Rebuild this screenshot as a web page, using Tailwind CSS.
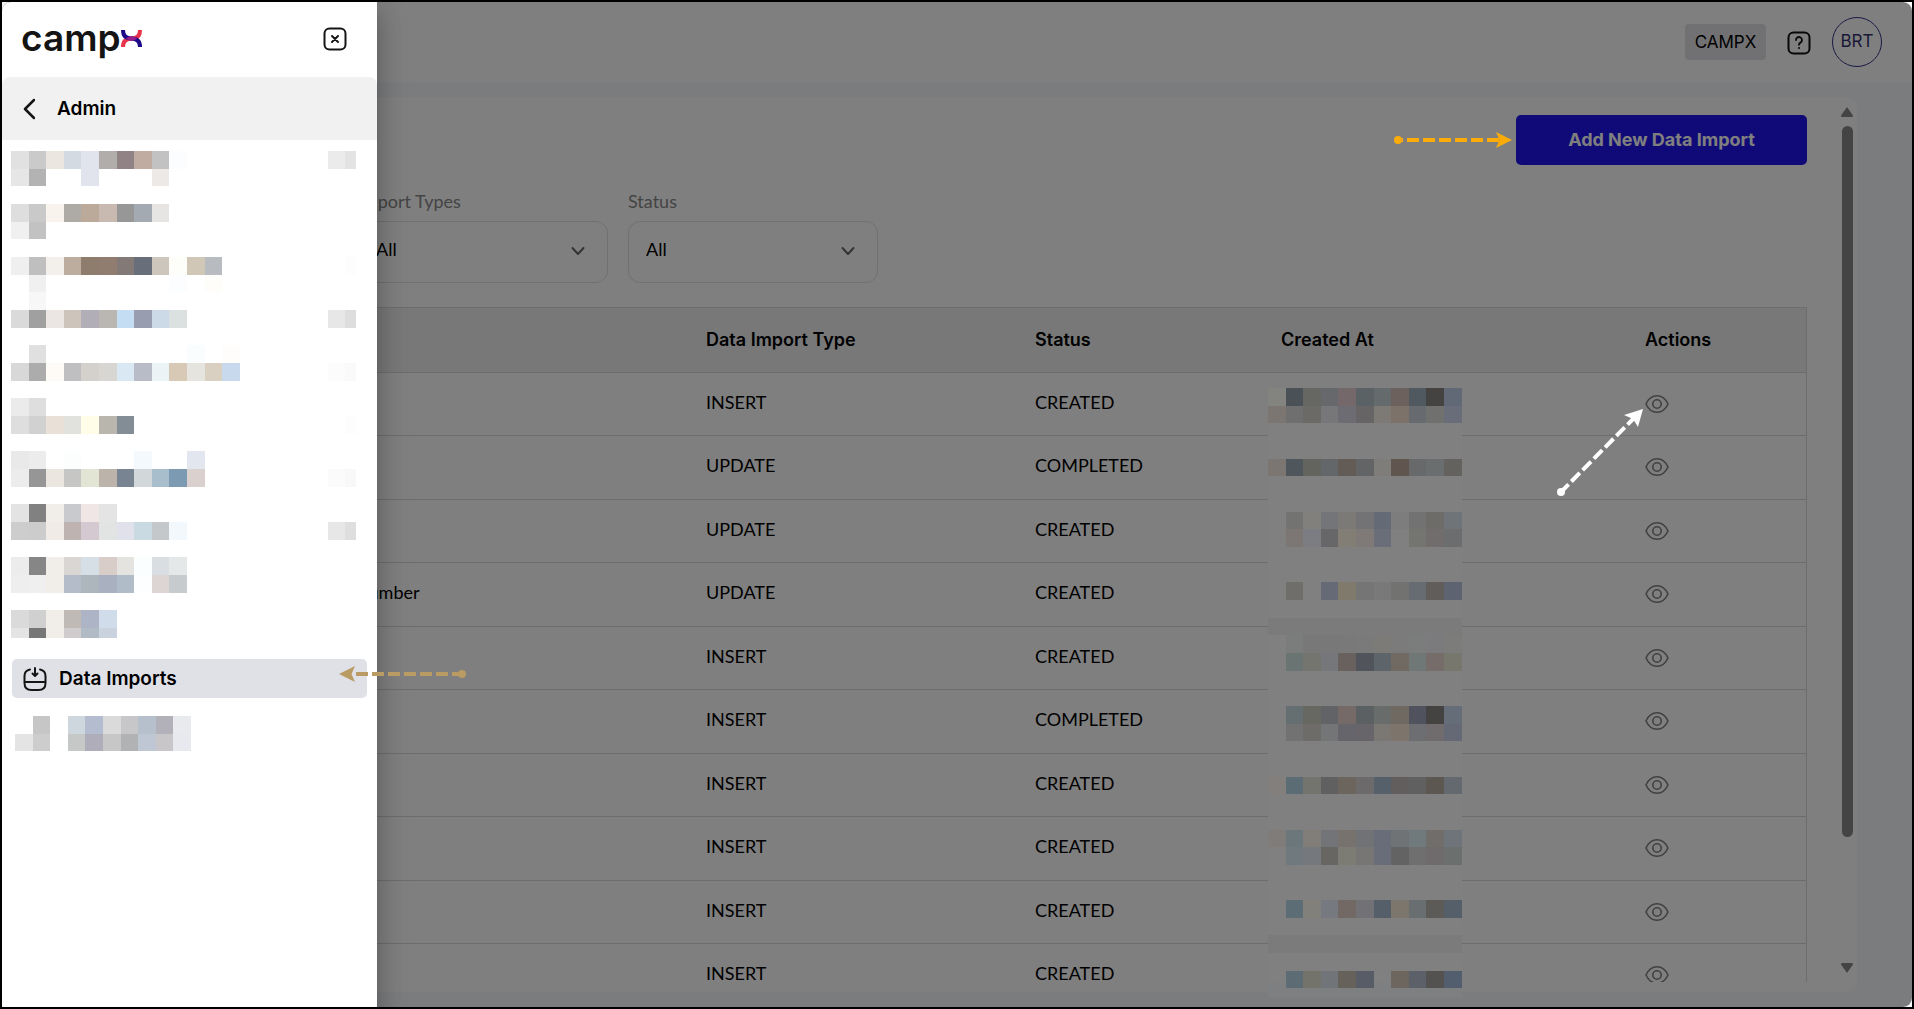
<!DOCTYPE html>
<html lang="en">
<head>
<meta charset="utf-8">
<title>CampX – Data Imports</title>
<script src="https://cdn.jsdelivr.net/npm/@tailwindcss/browser@4"></script>
</head>
<body class="bg-white">
<div class="relative h-screen overflow-hidden border-2 border-black bg-white font-['Lato',sans-serif] text-lg text-black">

  <!-- Page behind the drawer -->
  <div class="flex h-full flex-col bg-[#f6f8fc]">
    <header class="flex h-20 shrink-0 items-center justify-end gap-[21px] bg-white pr-[30px] font-['Inter',sans-serif]">
      <span class="flex h-9 w-[81px] items-center justify-center rounded bg-[#e2e2e7] text-[17px]">CAMPX</span>
      <button type="button" aria-label="Help" class="pt-0.5">
        <svg class="size-6" viewBox="0 0 24 24" fill="none" stroke="#111" stroke-width="2" stroke-linecap="round"><rect x="1.500" y="1.500" width="21" height="21" rx="5"/><path d="M9 9a3 3 0 1 1 4.500 2.600c-1 .600-1.500 1.200-1.500 2.200" stroke-width="1.800"/><circle cx="12" cy="17" r=".4" stroke-width="1.400"/></svg>
      </button>
      <button type="button" class="size-[50px] rounded-full border border-[#33338a] pb-0.5 text-[17px] text-[#33336e]">BRT</button>
    </header>

    <main class="mt-[15px] mr-[55px] mb-[15px] flex min-h-0 flex-1 rounded-r-xl bg-white">
      <div class="mb-2.5 min-w-0 flex-1 overflow-hidden pt-[18px] pl-[340px]">
        <div class="flex justify-end">
          <button type="button" class="h-[50px] w-[291px] rounded-[5px] bg-[#1e14f0] font-['Inter',sans-serif] text-lg font-bold text-white">Add New Data Import</button>
        </div>
        <div class="mt-6 flex gap-5 pl-4">
          <div class="flex w-[250px] flex-col gap-2">
            <label for="types" class="leading-6 text-[#888]">Import Types</label>
            <div class="relative">
              <select id="types" class="h-[62px] w-full appearance-none rounded-xl border border-[#e0e0e0] bg-white px-[17px] pb-1.5"><option>All</option></select>
              <svg class="pointer-events-none absolute top-[25px] right-[23px] h-2.5 w-3.5" viewBox="0 0 14 10" fill="none" stroke="#666" stroke-width="2" stroke-linecap="round" stroke-linejoin="round"><path d="M1.500 2 7 8l5.500-6"/></svg>
            </div>
          </div>
          <div class="flex w-[250px] flex-col gap-2">
            <label for="status" class="leading-6 text-[#888]">Status</label>
            <div class="relative">
              <select id="status" class="h-[62px] w-full appearance-none rounded-xl border border-[#e0e0e0] bg-white px-[17px] pb-1.5"><option>All</option></select>
              <svg class="pointer-events-none absolute top-[25px] right-[23px] h-2.5 w-3.5" viewBox="0 0 14 10" fill="none" stroke="#666" stroke-width="2" stroke-linecap="round" stroke-linejoin="round"><path d="M1.500 2 7 8l5.500-6"/></svg>
            </div>
          </div>
        </div>
        <div class="mt-6 border-x border-t border-[#dadada]">
          <table class="w-full table-fixed text-left">
            <colgroup><col><col class="w-[329px]"><col class="w-[246px]"><col class="w-[364px]"><col class="w-[161px]"></colgroup>
            <thead>
              <tr class="h-16 border-b border-[#dadada] bg-[#f1f1f1] font-['Inter',sans-serif] text-lg">
                <th class="p-0"></th><th class="p-0 font-semibold">Data Import Type</th><th class="p-0 font-semibold">Status</th><th class="p-0 font-semibold">Created At</th><th class="p-0 font-semibold">Actions</th>
              </tr>
            </thead>
            <tbody id="rows"></tbody>
          </table>
        </div>
      </div>
      <!-- Scroll bar -->
      <div class="flex w-[50px] shrink-0 flex-col items-center pt-2.5 pr-px pb-[19px] pl-[31px]">
        <svg class="h-2.5 w-3 shrink-0" viewBox="0 0 12 10" fill="#888"><path d="M6 0 12 8.500Q12 10 11 10H1Q0 10 0 8.500Z"/></svg>
        <div class="mt-[9px] flex min-h-0 flex-1 flex-col"><div class="h-[85%] w-[11px] rounded-full bg-[#888]"></div></div>
        <svg class="h-2.5 w-3 shrink-0" viewBox="0 0 12 10" fill="#888"><path d="M6 10 0 1.500Q0 0 1 0H11Q12 0 12 1.500Z"/></svg>
      </div>
    </main>
  </div>

  <!-- Backdrop -->
  <div class="absolute inset-0 rounded-[9px] bg-black/50"></div>

  <!-- Redacted creation dates -->
  <svg id="dates" class="absolute top-[386px] right-[450px] h-[610px] w-[194px]" shape-rendering="crispEdges" aria-hidden="true"><rect width="194" height="594" fill="#808080"/><rect y="594" width="194" height="16" fill="#7e7f80"/></svg>

  <!-- Drawer -->
  <aside class="absolute inset-y-0 left-0 flex w-[375px] flex-col rounded-tl-[9px] bg-white shadow-[0_8px_10px_-5px_rgba(0,0,0,0.2),0_16px_24px_2px_rgba(0,0,0,0.14),0_6px_30px_5px_rgba(0,0,0,0.12)]">
    <div class="flex h-[75px] shrink-0 items-start justify-between pr-[30px] pl-[19px]">
      <a href="#" class="flex items-start pt-3.5 text-[#141414]">
        <span class="font-['Inter',sans-serif] text-[37px] leading-[44px] font-semibold">camp</span>
        <svg class="mt-3.5 h-[17px] w-[21px]" viewBox="0 0 21 17" fill="none" stroke-width="4"><path d="M19 0c0 6-3.500 8.500-8.500 8.500S2 11 2 17" stroke="#e8344a"/><path d="M2 0c0 6 3.500 8.500 8.500 8.500S19 11 19 17" stroke="#1c0a86"/><path d="M5.500 8.500Q10.500 5 15.500 8.500 10.500 12 5.500 8.500Z" fill="#951f8d" stroke="#951f8d" stroke-width="1"/></svg>
      </a>
      <button type="button" aria-label="Close" class="mt-[25px]">
        <svg class="size-6" viewBox="0 0 24 24" fill="none" stroke="#151515" stroke-width="2" stroke-linecap="round"><rect x="1.500" y="1.500" width="21" height="21" rx="5"/><path d="m9 9 6 6m0-6-6 6"/></svg>
      </button>
    </div>
    <a href="#" class="flex h-[63px] shrink-0 items-center gap-[22px] rounded-t-lg bg-[#f1f1f1] pl-[21px] font-['Inter',sans-serif] text-[19px] font-semibold">
      <svg class="h-[22px] w-3" viewBox="0 0 12 22" fill="none" stroke="#151515" stroke-width="2.500" stroke-linecap="round" stroke-linejoin="round"><path d="M11 2 2 11l9 9"/></svg>
      Admin
    </a>
    <nav class="flex flex-col pt-[11px]">
      <svg id="menu" class="ml-[9px] h-[487px] w-[345px]" shape-rendering="crispEdges" aria-hidden="true"></svg>
      <a href="#" class="mt-[21px] ml-2.5 flex h-[39px] w-[355px] items-center gap-3 rounded-[5px] bg-[#e0e1e7] pl-[11px] font-['Inter',sans-serif] text-[19px] font-semibold">
        <svg class="size-6" viewBox="0 0 24 24" fill="none" stroke="#151515" stroke-width="2" stroke-linecap="round" stroke-linejoin="round"><path d="M7 2.500Q1.500 3.500 1.500 9v7q0 7 7 7h7q7 0 7-7V9q0-5.500-5.500-6.500M1.500 15h21M12 1v7M9.500 6.500 12 9l2.500-2.500"/></svg>
        Data Imports
      </a>
      <svg id="last" class="mt-[18px] ml-[13px] h-[35px] w-[177px]" shape-rendering="crispEdges" aria-hidden="true"></svg>
    </nav>
  </aside>

  <!-- Annotation arrows -->
  <svg class="absolute top-[662px] left-[336px] h-5 w-[130px]" viewBox="0 0 130 20" fill="#b99b63" aria-hidden="true"><path d="M1 10 17 2l-3.500 8L17 18Z"/><path d="M18 10H122" stroke="#b99b63" stroke-width="4" stroke-dasharray="12 4"/><circle cx="124" cy="10" r="4"/></svg>
  <svg class="absolute top-32 right-[398px] h-5 w-[120px]" viewBox="0 0 120 20" fill="#fbab0a" aria-hidden="true"><path d="M118 10 102 2l3.500 8L102 18Z"/><path d="M105 10H8" stroke="#fbab0a" stroke-width="4" stroke-dasharray="12 4"/><circle cx="4" cy="10" r="4"/></svg>
  <svg class="absolute top-[404px] right-[266px] h-[92px] w-[92px]" viewBox="0 0 92 92" fill="#fff" aria-hidden="true"><path d="M89 3 84 21l-5-8-9-4Z"/><path d="M82 10 7 86" stroke="#fff" stroke-width="4" stroke-dasharray="12 4"/><circle cx="7" cy="86" r="4"/></svg>
</div>

<script>
const records = [['','INSERT','CREATED'],['','UPDATE','COMPLETED'],['','UPDATE','CREATED'],['Number','UPDATE','CREATED'],['','INSERT','CREATED'],['','INSERT','COMPLETED'],['','INSERT','CREATED'],['','INSERT','CREATED'],['','INSERT','CREATED'],['','INSERT','CREATED']];
const eye = '<button type="button" aria-label="View" class="block"><svg class="h-5 w-6" viewBox="0 0 24 20" fill="none" stroke="#828282" stroke-width="1.600"><path d="M1 10C3.500 4.500 7.500 1.800 12 1.800S20.500 4.500 23 10c-2.500 5.500-6.500 8.200-11 8.200S3.500 15.500 1 10Z"/><circle cx="12" cy="10" r="4.200"/></svg></button>';
document.getElementById('rows').innerHTML = records.map(r =>
  `<tr class="border-b border-[#dadada] odd:h-[63px] even:h-16"><td class="p-0 pb-1 pl-3">${r[0]}</td><td class="p-0 pb-1">${r[1]}</td><td class="p-0 pb-1">${r[2]}</td><td class="p-0"></td><td class="p-0">${eye}</td></tr>`).join('');

// Each entry is [row, first column, colours]; '-' leaves a cell empty.
function mosaic(id, data) {
  const x = n => Math.round(n * 17.6), y = n => Math.round(n * 17.66);
  document.getElementById(id).insertAdjacentHTML('beforeend', data.map(([r, c, s]) => s.split(' ').map((h, i) =>
    h === '-' ? '' : `<rect x="${x(c + i)}" y="${y(r)}" width="${x(c + i + 1) - x(c + i)}" height="${y(r + 1) - y(r)}" fill="#${h}"/>`).join('')).join(''));
}
mosaic('menu', [
  [0,0,'e1e1e1 cacaca ece6e1 d3dae1 e2e4ed b0adaa 908285 c1aca1 c2c2c2 fcfdff'],[0,18,'ebebeb e3e3e3'],
  [1,0,'e6e6e6 b3b3b3 - - e2e4ed - - - ede9e6'],
  [3,0,'dedede c9c9c9 f9f3ee aeaaa5 bbaa9a c8bab1 979798 a4aab2 e6e5e4'],[4,0,'f0f0f0 c2c2c2'],
  [6,0,'efefef bfbfbf f3f0eb bdad9e 8e7d6d 917d6f 837a77 696e7b cdc6bc fdfef9 d0c7b7 b8bcc1'],[6,19,'fdfdfd'],
  [7,1,'f0f0f0 - - - - - - - fbfdff - fffdfa'],[8,1,'f7f7f7'],
  [9,0,'dadada a0a0a0 ebe6e3 cdc5bb b1aeb7 bab6b1 c5ddf3 989eb0 ccd9e6 dbe0e1'],[9,18,'e7e7e7 dddddd'],
  [11,1,'e0e0e0 - - - - - - - - f9fdfe - fffdfb'],
  [12,0,'d8d8d8 acacac fefaf5 bfbfc2 d4d0cb d7d6d2 dae8f3 b7bcc6 ebf3f6 d8c8b6 e5e4df d9d0c2 c9d9ed'],[12,18,'fcfcfc fafafa'],
  [14,0,'ebebeb dedede'],[15,0,'dedede d1d1d1 e9e0d8 e1e2de fffce8 b9b6ae 828d96'],[15,19,'fdfdfd'],
  [17,0,'e9e9e9 ececec - fcfefe - - - f3f9fd - - e2e6ef'],[18,0,'ececec 969696 ebe6e0 c6c6c5 e2e4d4 bcb3aa 788492 d2d7d9 a9becd 7d9ab3 dad0cd'],[18,18,'fbfbfb f8f8f8'],
  [20,0,'e3e3e3 818181 f1ede8 c9cace f1e6e6 e4e4e4'],[21,0,'cdcdcd cccccc f0ebe7 beb3b0 d4c9d0 e2e4e3 e0e1eb c9dae2 c4c8cb f3f8fc'],[21,18,'e7e7e7 dedede'],
  [23,0,'ececec 868686 f1ede8 dad6d3 d6dee6 d9cdc9 e4e3df fafeff d9dee3 e4e8e9'],[24,0,'eeeeee efefef f1ede8 b4bcca adb5bd a9b0c0 b0bcc7 fcfeff ddd5d3 c6cbce'],
  [26,0,'dadada d0d0d0 f1ede8 c0bab7 adb4c5 d0dce9'],[27,0,'e4e4e4 777777 f1ede8 d0cbcc b0bbc5 c9d2dd']
]);
mosaic('last', [[0,1,'c6c6c6 - ced6de b4bccf dadada c7c7c9 b5c0cc b2b1ba e9eaee'],[1,0,'e4e4e4 cdcdcd - c5c8c7 aeadb9 c7c7c7 b0b2b4 c0c7d4 c9c6c9 e8e9ee']]);
mosaic('dates', [
  [0,0,'83837f 4a5258 666762 67686b 75686a 5b6265 656b6c 6c615c 515960 454341 616976'],
  [1,0,'7c7673 6f6f6f 6b6a66 77777a 6d6c72 676466 7d7a75 7c7269 676b70 70706f 686d79'],
  [4,0,'7c7673 50575c 64645f 64676a 625b56 626466 7f7d79 60564f 68696b 6b6e6e 64625f'],
  [7,1,'737371 81807c 747578 7b7a76 737376 646b76 7d7d7e 727272 6e6c69 6f7478'],
  [8,1,'7c7674 7c7d82 67676a 827d75 7f7a77 696e79 808080 747471 726d6d 6b6d6f'],
  [11,1,'706e6b - 666a76 7f7a6b 757576 797979 727270 666c71 605d5b 5d6370'],
  [13,0,'7b7b7b 7b7b7b 7b7b7b 7b7b7b 7b7b7b 7b7b7b 7b7b7b 7b7b7b 7b7b7b 7b7b7b 7b7b7b'],
  [14,1,'7a7d7c 787878 787878 7a7979 7a7a7a 7d7b78 7b7b7b 7b7d7c 7b7b7d 7c7c7b'],
  [15,1,'6a7472 757570 75777a 68615d 51545b 5d646a 706a63 707777 766d6a 77776d'],
  [18,1,'656f72 676862 626366 766a69 5b6062 686c6b 706962 50535e 454341 656d78'],
  [19,1,'727272 6d6c69 747577 66656b 676569 7b7874 7d746c 6c6e72 706c6e 646975'],
  [22,0,'827f7c 5c6c75 72746d 606060 6b655e 6c6a6a 55606b 635e5e 606060 5d5752 63696e'],
  [25,0,'7f7c79 6c777b 817e7a 727477 77726d 717276 686d79 707375 707a7c 706d6b 6e7479'],
  [26,1,'70797d 75787d 686663 7c7b74 777674 696d79 636363 6f6f6f 6f6b6c 6b6f6e'],
  [29,1,'5d6d76 82807a 777980 736964 727276 545f6a 7d766d 696e70 5c5b58 545f6a'],
  [31,0,'7b7b7b 7b7b7b 7b7b7b 7b7b7b 7b7b7b 7b7b7b 7b7b7b 7b7b7b 7b7b7b 7b7b7b 7b7b7b'],
  [33,1,'5c6b74 73726b 71757a 67615b 585c66 - 6c665f 5b6069 535250 525d6d']
]);
</script>
</body>
</html>
